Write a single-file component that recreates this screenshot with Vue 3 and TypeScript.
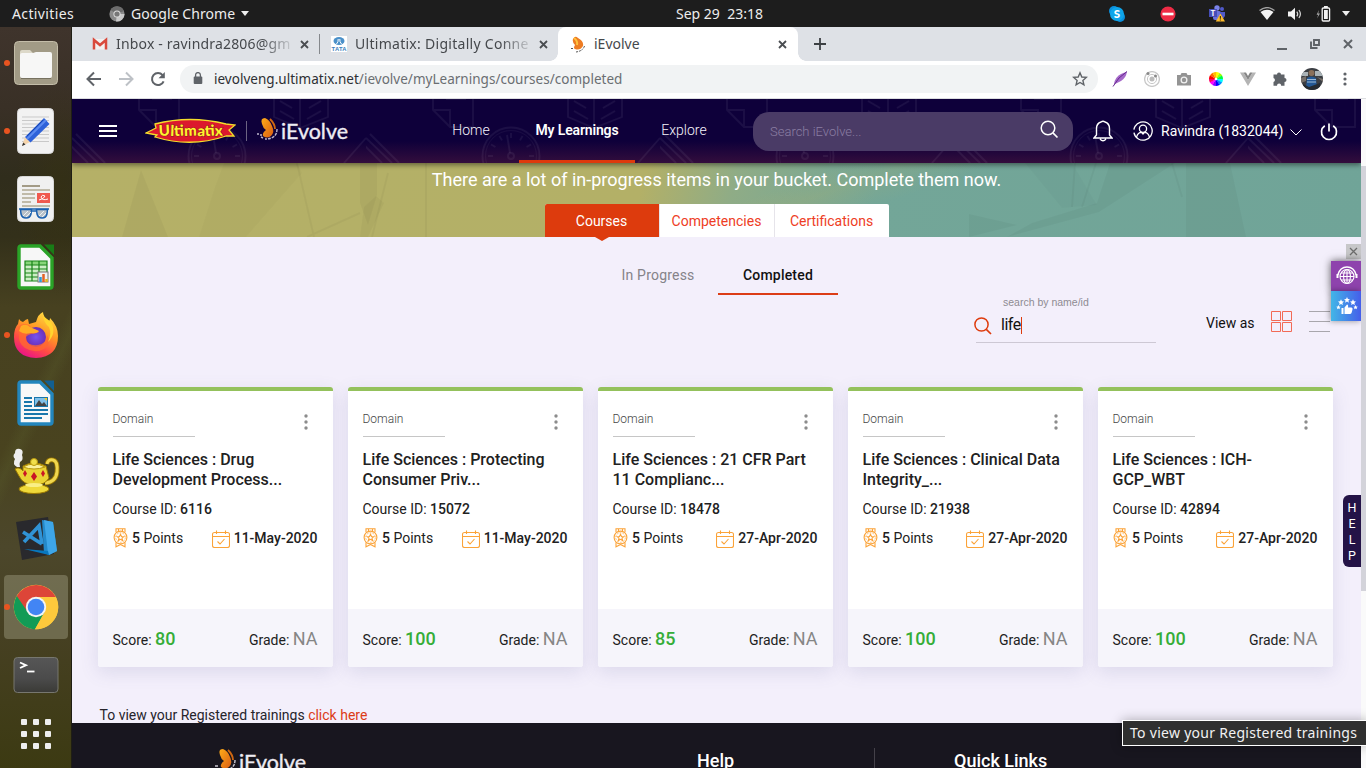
<script setup lang="ts">
interface Course {
  title: string[]
  id: string
  date: string
  score: number
}

const courses: Course[] = [
  { title: ['Life Sciences : Drug', 'Development Process...'], id: '6116', date: '11-May-2020', score: 80 },
  { title: ['Life Sciences : Protecting', 'Consumer Priv...'], id: '15072', date: '11-May-2020', score: 100 },
  { title: ['Life Sciences : 21 CFR Part', '11 Complianc...'], id: '18478', date: '27-Apr-2020', score: 85 },
  { title: ['Life Sciences : Clinical Data', 'Integrity_...'], id: '21938', date: '27-Apr-2020', score: 100 },
  { title: ['Life Sciences : ICH-', 'GCP_WBT'], id: '42894', date: '27-Apr-2020', score: 100 },
]

const nineDots: number[] = [0, 1, 2, 3, 4, 5, 6, 7, 8]
const clockTicks: number[] = [0, 30, 60, 90, 120, 150, 180, 210, 240, 270, 300, 330]
const wheel: string[] = ['#ff0', '#9f0', '#0f4', '#0ff', '#08f', '#00f', '#80f', '#f0f', '#f06', '#f00', '#f60', '#fb0']
</script>

<template>
  <div class="screen">
    <header class="topbar">
      <span class="activities">Activities</span>
      <svg class="app-ic" width="16" height="16" viewBox="0 0 16 16">
        <circle cx="8" cy="8" r="7.6" fill="#8b8b8b" />
        <path d="M8 8L1.5 4A7.6 7.6 0 0 1 15 5Z" fill="#6d6d6d" />
        <path d="M8 8H15.5A7.6 7.6 0 0 1 7 15.5Z" fill="#c9c9c9" />
        <circle cx="8" cy="8" r="3.6" fill="#ddd" /><circle cx="8" cy="8" r="2.6" fill="#777" />
      </svg>
      <span class="app-name">Google Chrome</span>
      <i class="tri"></i>
      <span class="clock">Sep 29&nbsp; 23:18</span>
      <div class="tray">
        <svg width="16" height="16" viewBox="0 0 16 16">
          <circle cx="5" cy="5" r="5" fill="#0a8fdc" /><circle cx="11" cy="11" r="5" fill="#0a8fdc" /><circle cx="8" cy="8" r="7" fill="#0fa5ea" />
          <text x="8" y="12" text-anchor="middle" font-family="Lato, sans-serif" font-weight="900" font-size="11.5" fill="#fff">S</text>
        </svg>
        <svg class="t2" width="16" height="16" viewBox="0 0 16 16"><circle cx="8" cy="8" r="7.6" fill="#ee2b45" /><rect x="2.5" y="6.7" width="11" height="2.6" fill="#fff" /></svg>
        <svg class="t3" width="18" height="17" viewBox="0 0 18 17">
          <circle cx="9" cy="3" r="2.7" fill="#7b83eb" /><circle cx="14" cy="4" r="2" fill="#5059c9" />
          <rect x="5" y="6" width="8" height="9" rx="2" fill="#6a72dc" /><path d="M12 7h5v4q-2 4-5 2z" fill="#5059c9" />
          <rect x="1" y="4" width="8" height="8" fill="#464eb8" />
          <text x="5" y="11" text-anchor="middle" font-family="Lato, sans-serif" font-weight="700" font-size="8" fill="#fff">T</text>
          <path d="M12.4 8.4L17 16.4H7.8Z" fill="#fdbb2b" /><path d="M12.4 11v2.7M12.4 14.4v1.2" stroke="#4a3500" stroke-width="1.2" />
        </svg>
        <svg class="t4" width="16" height="14" viewBox="0 0 16 14"><path d="M.5 3.6Q8-2.4 15.500 3.600" stroke="#a3a3a3" stroke-width="1.300" fill="none" /><path d="M1.500 5Q8 .3 14.500 5L8 13Z" fill="#f2f2f2" /></svg>
        <svg class="t5" width="16" height="14" viewBox="0 0 16 14"><path d="M1 4.500H4L8 .8V13L4 9.500H1Z" fill="#f2f2f2" /><path d="M9.800 4.600q1.800 2.400 0 4.800M11.900 3q3 4 0 8" stroke="#d8d8d8" stroke-width="1.200" fill="none" /></svg>
        <svg class="t6" width="16" height="16" viewBox="0 0 16 16"><path d="M4 4L1.600 8.800H3.300L2 12.500L5 7.600H3.200Z" fill="#aaa" /><rect x="7.200" y="2" width="7.400" height="13" rx="1" fill="none" stroke="#f2f2f2" stroke-width="1.300" /><rect x="9" y="4" width="3.800" height="9" fill="#f2f2f2" /><rect x="9" y="0" width="3.800" height="2" fill="#f2f2f2" /></svg>
        <i class="tri t7"></i>
      </div>
    </header>

    <div class="desk">
      <aside class="dock">
        <div class="slot run">
          <svg width="44" height="44" viewBox="0 0 44 44">
            <rect x=".5" y=".5" width="43" height="43" rx="4" fill="#a29b86" stroke="#c4bda9" />
            <path d="M6 11q0-2 2-2h8l3 3h3v10H6z" fill="#ddd9c9" />
            <path d="M6 14q0-2 2-2h11l3-1H36q2 0 2 2v22q0 2-2 2H8q-2 0-2-2z" fill="#f7f7f6" /><path d="M7 37.500H37" stroke="#777260" />
          </svg>
        </div>
        <div class="slot run">
          <svg width="38" height="46" viewBox="0 0 38 46">
            <rect x=".5" y=".5" width="36" height="45" rx="4" fill="#f2f2f2" stroke="#d7d7d7" />
            <path d="M5 9H32M5 12.500H32M5 16H32M5 19.500H32M5 23H32M5 26.500H32M5 30H32M5 33.500H32" stroke="#c9c9c9" />
            <path d="M5 38L8 29L13 34Z" fill="#f5d4ab" /><path d="M5 38L6.200 34.500L8.500 36.600Z" fill="#333" />
            <path d="M8 29L27 10L32.500 16L13.500 34.500Z" fill="#2e62d9" /><path d="M10 31L29 12" stroke="#5c8bf0" stroke-width="2" /><path d="M10 28L26 12" stroke="#1746b4" />
          </svg>
        </div>
        <div class="slot">
          <svg width="38" height="46" viewBox="0 0 38 46">
            <rect x=".5" y=".5" width="36" height="45" rx="4" fill="#f0f0f0" stroke="#d7d7d7" />
            <path d="M5 10H23" stroke="#a39b86" stroke-width="2" /><path d="M5 14H33M5 18H18M5 22H18M5 26H14M5 30H33" stroke="#c0baa9" stroke-width="2" />
            <rect x="20" y="17" width="13" height="10" fill="#f0594f" /><path d="M22 24q5-1 6-4q-3-2-4 1q1 4 7 2" fill="none" stroke="#fff" />
            <g fill="#b9c1c8" stroke="#1d62b0" stroke-width="1.500"><path d="M3.500 33.500H14.500L14 38Q13 42 9 42Q5 42 4 38Z" /><path d="M19.500 33.500H30.500L30 38Q29 42 25 42Q21 42 20 38Z" /><path d="M15 35h4M2 33h30" fill="none" /></g><path d="M6 40L11 35M9 41L14 36M22 40L27 35M25 41L29 37" stroke="#eef1f3" />
          </svg>
        </div>
        <div class="slot">
          <svg width="38" height="46" viewBox="0 0 38 46">
            <path d="M4 2H23L35 14V42Q35 44 33 44H4Q2 44 2 42V4Q2 2 4 2Z" fill="#f7f7f7" stroke="#2aa327" stroke-width="3.400" /><path d="M27 .5H37V11Z" fill="#197c17" />
            <path d="M8 17H30V37H8Z" fill="#ccefc4" /><path d="M8 17H30V21H8Z" fill="#88d67a" /><path d="M8 17H30V37H8ZM8 21H30M8 25H30M8 29H30M8 33H30M15 17V37M22 17V37" stroke="#188418" stroke-width="1.200" fill="none" />
            <rect x="21" y="28" width="10" height="10" fill="#f2f2f2" stroke="#777" /><path d="M23.500 33V38" stroke="#2e9ad5" stroke-width="2.500" /><path d="M26.500 30V38" stroke="#e26226" stroke-width="2.500" /><path d="M29.500 35V38" stroke="#e3b91d" stroke-width="2.500" />
          </svg>
        </div>
        <div class="slot run">
          <svg width="46" height="48" viewBox="0 0 46 48">
            <defs>
              <linearGradient id="fox" x1=".8" y1="0" x2=".3" y2="1"><stop offset="0" stop-color="#ffe246" /><stop offset=".4" stop-color="#ff9a24" /><stop offset=".72" stop-color="#ff4a45" /><stop offset="1" stop-color="#e8128a" /></linearGradient>
              <radialGradient id="globe"><stop offset="0" stop-color="#7652ef" /><stop offset="1" stop-color="#6b2fb5" /></radialGradient>
            </defs>
            <path d="M23 11Q25 3 30 1Q30 6 36 10Q37 9 37 7Q45 15 45 25Q45 46 23 47Q1 46 1 26Q1 17 5 13L6 8Q8 11 10 11Q13 8 15 8L16 13Z" fill="url(#fox)" />
            <circle cx="23" cy="26" r="10" fill="url(#globe)" />
            <path d="M5 16Q10 11 16 14L20 19Q25 18 26 21Q22 23 18 23Q11 25 13 29Q15 35 25 34Q34 32 34 24Q39 32 31 38Q22 43 12 37Q5 32 6 24Z" fill="#ff6a30" opacity=".75" />
            <path d="M8 15Q13 12 17 16L26 20Q24 23 18 22Q11 24 6 20Z" fill="#ffac24" /><path d="M30 5Q31 12 36 16Q39 23 35 31Q44 22 38 11Z" fill="#ffd52f" />
          </svg>
        </div>
        <div class="slot">
          <svg width="38" height="46" viewBox="0 0 38 46">
            <path d="M4 2H23L35 14V42Q35 44 33 44H4Q2 44 2 42V4Q2 2 4 2Z" fill="#f8f8f8" stroke="#2386bd" stroke-width="3.400" /><path d="M27 .5H37V11Z" fill="#125f92" />
            <path d="M7 18H15M7 22H15M7 26H15M7 30H31M7 34H31M7 38H25" stroke="#1977ac" stroke-width="1.800" /><rect x="17.500" y="17.500" width="13" height="9" fill="#7fc0e9" stroke="#1977ac" /><path d="M18 26L22 20L25 24L27 22L30 26Z" fill="#444" /><path d="M27 18H30V21Z" fill="#ffc923" />
          </svg>
        </div>
        <div class="slot">
          <svg width="50" height="48" viewBox="0 0 50 48">
            <path d="M6 20Q1 17 4 12Q1 9 4 6Q4 1 9 2Q13 3 11 8Q13 13 9 15Q8 17 9 20Z" fill="#eee" />
            <path d="M36 17Q37 12 42 13Q47 14 46 25Q45 35 34 36" fill="none" stroke="#9b7902" stroke-width="4.800" /><path d="M36 17Q37 12 42 13Q47 14 46 25Q45 35 34 36" fill="none" stroke="#f0d74e" stroke-width="3" />
            <path d="M12 19Q23 13 35 19L38 31Q34 38 24 38Q12 38 8 29L4 22Q8 19 12 24Z" fill="#ead234" stroke="#9b7902" /><ellipse cx="23" cy="42" rx="15" ry="4.500" fill="#efd939" stroke="#9b7902" /><ellipse cx="23" cy="38" rx="9" ry="2" fill="#f9ef86" />
            <path d="M12 20Q23 14 34 20Q23 24 12 20Z" fill="#fbf19b" stroke="#b8980d" /><circle cx="23" cy="15" r="3.500" fill="#f2df4b" stroke="#b8980d" />
            <g fill="#c91525"><path d="M14 23L16 26.500L14 30L12 26.500Z" /><path d="M23 25L26 29.500L23 34L20 29.500Z" /><path d="M32 23L34 26.500L32 30L30 26.500Z" /></g>
          </svg>
        </div>
        <div class="slot">
          <svg width="42" height="46" viewBox="0 0 42 46">
            <path d="M1 6L33 1L39 38L7 44Z" fill="#29292d" /><path d="M27 4L38 6L42 35L34 39L29 37Z" fill="#2489ca" /><path d="M29 4L33 37L34 39L42 35L38 6Z" fill="#3ea6e8" /><path d="M9 33L33 35L34 39Z" fill="#0878bf" />
            <path d="M8 16L27 28M9 26L24 10L27 28" fill="none" stroke="#3093d6" stroke-width="3.600" />
          </svg>
        </div>
        <div class="slot run focused">
          <svg width="46" height="46" viewBox="0 0 46 46">
            <circle cx="23" cy="23" r="22.300" fill="#fdc93c" />
            <path d="M3.500 12.500A22.300 22.300 0 0 1 42.800 13H23L13 28Z" fill="#dd4538" />
            <path d="M3.800 12A22.300 22.300 0 0 0 22 45.300L32 28L14 27Z" fill="#129b56" />
            <path d="M23 13H42.800A22.300 22.300 0 0 1 22 45.300L32 27Z" fill="#fdc93c" />
            <circle cx="23" cy="23" r="10.200" fill="#f4f4f4" /><circle cx="23" cy="23" r="8.300" fill="#4285f4" />
          </svg>
        </div>
        <div class="slot">
          <svg width="46" height="38" viewBox="0 0 46 38">
            <defs><linearGradient id="term" x1="0" y1="0" x2="0" y2="1"><stop offset="0" stop-color="#565656" /><stop offset=".6" stop-color="#4b4b4b" /><stop offset="1" stop-color="#3a3a36" /></linearGradient></defs>
            <rect x="1" y="1.500" width="44" height="35" rx="3.500" fill="url(#term)" stroke="#77776f" />
            <path d="M7 6.500L13 9.200L7 12" fill="none" stroke="#fff" stroke-width="1.900" /><path d="M14 15.500H21.500" stroke="#fff" stroke-width="1.800" />
          </svg>
        </div>
        <div class="apps"><i v-for="d in nineDots" :key="d"></i></div>
      </aside>

      <main class="browser">
        <div class="tabs">
          <div class="tab first">
            <svg width="16" height="16" viewBox="0 0 16 16"><rect x="1.500" y="3" width="13" height="10.500" fill="#f2f0ef" /><path d="M2 13.500V4L8 9L14 4V13.500" fill="none" stroke="#d9493c" stroke-width="2.500" /></svg>
            <span class="tt fade">Inbox - ravindra2806@gm</span>
            <svg class="x" width="9" height="9" viewBox="0 0 9 9"><path d="M1 1L8 8M8 1L1 8" /></svg>
          </div>
          <div class="tab second">
            <svg width="16" height="16" viewBox="0 0 16 16"><rect width="16" height="16" fill="#fff" /><ellipse cx="8" cy="5" rx="5.500" ry="4" fill="#4a90c9" /><path d="M5.500 8Q7.500 6 7.200 3M10.500 8Q8.500 6 8.800 3" stroke="#fff" fill="none" /><text x=".5" y="15" font-family="Liberation Sans, sans-serif" font-weight="700" font-size="5.800" textLength="15" fill="#3a80bd">TATA</text></svg>
            <span class="tt fade">Ultimatix: Digitally Conne</span>
            <svg class="x" width="9" height="9" viewBox="0 0 9 9"><path d="M1 1L8 8M8 1L1 8" /></svg>
          </div>
          <div class="tab active">
            <svg width="16" height="17" viewBox="0 0 16 17"><path d="M3 3Q5-1 8 2Q14 5 13 10Q10 15 5 13Q3 12 5 9Q2 6 3 3Z" fill="#ed7c23" /><path d="M4 2Q8 5 7 9" stroke="#ffc23e" stroke-width="2" fill="none" /><path d="M14.500 10Q13 15 6 16M1 12.500h2" stroke="#555" stroke-dasharray="2 1" fill="none" /></svg>
            <span class="tt">iEvolve</span>
            <svg class="x" width="9" height="9" viewBox="0 0 9 9"><path d="M1 1L8 8M8 1L1 8" /></svg>
          </div>
          <svg class="plus" width="12" height="12" viewBox="0 0 12 12"><path d="M6 0V12M0 6H12" stroke="#3c4043" stroke-width="1.800" /></svg>
          <div class="winctl">
            <svg width="10" height="12" viewBox="0 0 10 12"><path d="M0 11H10" stroke="#5f6368" stroke-width="2" /></svg>
            <svg width="10" height="10" viewBox="0 0 10 10"><path d="M4 1H9V6H4ZM1 2.500V9H7.500" stroke="#5f6368" stroke-width="1.900" fill="none" /></svg>
            <svg width="10" height="10" viewBox="0 0 10 10"><path d="M1 1L9 9M9 1L1 9" stroke="#5f6368" stroke-width="2" /></svg>
          </div>
        </div>

        <div class="toolbar">
          <svg width="16" height="16" viewBox="0 0 16 16"><path d="M15 8H2M8 1.500L1.500 8L8 14.500" fill="none" stroke="#5f6368" stroke-width="2" /></svg>
          <svg width="16" height="16" viewBox="0 0 16 16"><path d="M1 8H14M8 1.500L14.500 8L8 14.500" fill="none" stroke="#bdc1c6" stroke-width="2" /></svg>
          <svg width="16" height="16" viewBox="0 0 16 16"><path d="M13.600 10.300A6 6 0 1 1 12.600 4.200" fill="none" stroke="#5f6368" stroke-width="2" /><path d="M14.800 1V7.300H8.500Z" fill="#5f6368" /></svg>
          <div class="omni">
            <svg width="10" height="13" viewBox="0 0 10 13"><rect x=".7" y="4.500" width="8.600" height="7.500" rx="1" fill="#5f6368" /><path d="M2.600 5V3A2.400 2.400 0 0 1 7.400 3V5" fill="none" stroke="#5f6368" stroke-width="1.300" /></svg>
            <span class="url"><b>ievolveng.ultimatix.net</b>/ievolve/myLearnings/courses/completed</span>
            <svg class="star" width="16" height="16" viewBox="0 0 16 16"><path d="M8 1.800L9.800 6L14.300 6.400L10.900 9.400L11.900 13.900L8 11.500L4.100 13.900L5.100 9.400L1.700 6.400L6.200 6Z" fill="none" stroke="#5f6368" stroke-width="1.400" /></svg>
          </div>
          <div class="exts">
            <svg width="16" height="16" viewBox="0 0 16 16"><path d="M2 13Q3 6 9 3L15 .5Q14 7 9 10L3 13Z" fill="#a569c9" /><path d="M1 15.500Q6 6 15 .5" fill="none" stroke="#682b90" /></svg>
            <svg width="16" height="16" viewBox="0 0 16 16"><g fill="none" stroke="#c8c8c8"><circle cx="8" cy="8" r="7.400" stroke-width="1.300" /><circle cx="8" cy="8" r="4.600" /></g><circle cx="8" cy="8" r="2.500" fill="#bbb" /><circle cx="4" cy="2.500" r="1.500" fill="#888" /><circle cx="11.500" cy="5" r="1.500" fill="#888" /></svg>
            <svg width="16" height="16" viewBox="0 0 16 16"><path d="M1 4H4.500L5.500 2H10.500L11.500 4H15V14.500H1Z" fill="#949494" /><circle cx="8" cy="9" r="3.500" fill="#f1f1f1" /><circle cx="8" cy="9" r="2.200" fill="#949494" /></svg>
            <svg width="16" height="16" viewBox="0 0 16 16"><path v-for="(c, i) in wheel" :key="c" d="M8 8V1A7 7 0 0 1 11.700 2Z" :fill="c" :transform="`rotate(${i * 30} 8 8)`" /><circle cx="8" cy="8" r="1.300" fill="#fff" /></svg>
            <svg width="16" height="16" viewBox="0 0 16 16"><path d="M0 1.500H3.500L8 9L12.500 1.500H16L8 15Z" fill="#b4b4b4" /><path d="M3.500 1.500H6L8 5L10 1.500H12.500L8 9Z" fill="#858585" /></svg>
            <svg width="16" height="16" viewBox="0 0 16 16"><path d="M1.500 3.500H5A2 2 0 1 1 9 3.500H12.500V7A2 2 0 1 1 12.500 11V14.700H9.200A2.100 2.100 0 0 0 5 14.700H1.500V11A2.100 2.100 0 0 0 1.500 7Z" fill="#5f6368" /></svg>
            <svg class="avatar" width="22" height="22" viewBox="0 0 22 22"><defs><clipPath id="av"><circle cx="11" cy="11" r="11" /></clipPath></defs><g clip-path="url(#av)"><rect width="22" height="22" fill="#3b3e43" /><path d="M0 4H7V8H0ZM14 3H22V8H14Z" fill="#aab3b7" /><path d="M0 10L5 8V13L0 15ZM16 9L22 11V14Z" fill="#77706a" /><circle cx="10.500" cy="5" r="3" fill="#8a705a" /><path d="M5 20L6 10Q10 7 15 10L16 20Z" fill="#235895" /><path d="M6 11.500H15M6 14H15" stroke="#9dbbd8" stroke-width="1" /><path d="M2 16L8 19L19 15V22H2Z" fill="#252b32" /></g></svg>
            <svg class="kebab" width="4" height="14" viewBox="0 0 4 14"><g fill="#5f6368"><circle cx="2" cy="2" r="1.600" /><circle cx="2" cy="7" r="1.600" /><circle cx="2" cy="12" r="1.600" /></g></svg>
          </div>
        </div>

        <div class="viewport">
          <div class="page">
            <header class="site">
              <svg class="pattern" width="1289" height="64">
                <defs>
                  <pattern id="doodle" x="0" y="0" width="294" height="64" patternUnits="userSpaceOnUse">
                    <g fill="none" stroke="#fff" stroke-opacity=".06" stroke-width="1.800">
                      <path d="M67 0V11L84 28H107V0M67 11H84V28M80 0H100" />
                      <circle cx="145" cy="57" r="28.500" /><circle cx="145" cy="57" r="25.500" stroke-width=".8" />
                      <circle cx="145" cy="57" r="3" /><path d="M144 54L141 36" />
                      <path v-for="t in clockTicks" :key="t" d="M145 34V39" :transform="`rotate(${t} 145 57)`" />
                      <path d="M202 0V18L228 29L256 18V0M228 0V29M208 2L220 9M208 12L222 20M249 2L237 9M249 12L235 20" />
                      <path d="M294 39L272 64M0 39L26 64M-4 44L16 64M4 35L33 64" />
                    </g>
                  </pattern>
                  <linearGradient id="wing" x1="0" y1="0" x2="1" y2="1"><stop offset="0" stop-color="#ffac18" /><stop offset="1" stop-color="#d95d13" /></linearGradient>
                </defs>
                <rect width="1289" height="64" fill="url(#doodle)" />
              </svg>
              <div class="bar">
                <div class="burger"><i></i><i></i><i></i></div>
                <svg class="ultimatix" width="91" height="26" viewBox="0 0 91 26">
                  <path d="M1 15L11 10L10 6Q45-3 81 6L90 7L84 12L89 18L81 18Q46 30 10 19L12 17Z" fill="#dc182d" stroke="#f3dc2b" stroke-width="1.300" />
                  <text x="14" y="18" rotate="-3 2 -3 3 -2 3 -3 2 -3" font-family="Lato, sans-serif" font-weight="900" font-size="15" textLength="64" fill="#fff22d" stroke="#8d1420" stroke-width="1" paint-order="stroke">Ultimatix</text>
                </svg>
                <i class="vsep"></i>
                <svg class="ievolve" width="92" height="28" viewBox="0 0 92 28">
                  <path d="M5 7Q3 1 8 1Q13 3 15 9Q18 15 14 19Q10 22 6 19Q5 16 9 13Q6 11 5 7Z" fill="url(#wing)" /><path d="M13 2Q18 7 18 12" stroke="#cf6711" stroke-width="1.800" fill="none" /><path d="M20 12Q20 22 8 22M4 20l2 1M0 17h2M3 18h2" stroke="#bdb6cd" stroke-width="1.400" stroke-dasharray="3 1" fill="none" />
                  <text x="24" y="22" font-family="Lato, sans-serif" font-size="21" textLength="67" lengthAdjust="spacingAndGlyphs" fill="#eeecf3" stroke="#eeecf3" stroke-width=".35">iEvolve</text>
                </svg>
                <nav class="nav">
                  <a>Home</a><a class="on">My Learnings</a><a>Explore</a>
                </nav>
                <div class="search">
                  <span>Search iEvolve...</span>
                  <svg width="19" height="19" viewBox="0 0 19 19"><circle cx="8" cy="8" r="6.800" fill="none" stroke="#fff" stroke-width="1.500" /><path d="M12.900 12.900L17.500 17.500" stroke="#fff" stroke-width="1.700" /></svg>
                </div>
                <svg class="bell" width="20" height="22" viewBox="0 0 20 22"><path d="M1 18H19L16.500 15V8.500Q16.500 3.500 12 2Q10 .5 8 2Q3.500 3.500 3.500 8.500V15ZM7 19Q10 22.500 13 19" fill="none" stroke="#fff" stroke-width="1.400" /></svg>
                <svg class="user" width="20" height="20" viewBox="0 0 20 20"><circle cx="10" cy="10" r="9.200" fill="none" stroke="#fff" stroke-width="1.300" stroke-dasharray="51 3" transform="rotate(210 10 10)" /><circle cx="10" cy="7.800" r="3.600" fill="none" stroke="#fff" stroke-width="1.300" /><path d="M3.500 16Q5 11.500 8.500 11.400L10 13L11.500 11.400Q15 11.500 16.500 16" fill="none" stroke="#fff" stroke-width="1.200" /></svg>
                <span class="uname">Ravindra (1832044)</span>
                <svg class="chev" width="12" height="7" viewBox="0 0 12 7"><path d="M.5.5L6 6L11.500.5" fill="none" stroke="#fff" /></svg>
                <svg class="power" width="18" height="18" viewBox="0 0 18 18"><path d="M4.800 2.800A7.500 7.500 0 1 0 13.200 2.800M9 .5V8.500" fill="none" stroke="#fff" stroke-width="1.700" /></svg>
              </div>
            </header>

            <section class="banner">
              <svg class="facets" width="1289" height="74">
                <g fill="#000" fill-opacity=".035">
                  <path d="M69 7L50 74H96Z" /><path d="M143 24L127 74H174L230 10L225 0H152Z" fill-opacity=".02" /><path d="M288 0H305V32L296 62L288 40Z" /><path d="M292 44L304 33L312 40L296 74H288Z" fill-opacity=".03" />
                  <path d="M897 51L945 62L897 74Z" /><path d="M935 74L1027 49L1103 0H1038L1025 40L960 60Z" /><path d="M1114 0H1158L1174 74H1114Z" /><path d="M953 0L990 45L1025 42L1000 0Z" fill-opacity=".02" />
                </g>
                <g stroke="#000" stroke-opacity=".035" stroke-width="2" fill="none"><path d="M225 0L242 74M354 0V74M316 10L300 74M288 50L235 74M1003 0L1000 44M1100 0L1110 34M1024 0L1010 44" /></g>
              </svg>
              <p>There are a lot of in-progress items in your bucket. Complete them now.</p>
              <div class="switch"><span class="sel">Courses</span><span>Competencies</span><span>Certifications</span></div>
            </section>

            <section class="content">
              <div class="subnav"><span>In Progress</span><span class="sel">Completed</span></div>
              <div class="tools">
                <div class="find">
                  <label>search by name/id</label>
                  <div class="row">
                    <svg width="18" height="18" viewBox="0 0 18 18"><circle cx="7.500" cy="7.500" r="6.600" fill="none" stroke="#de3b0d" stroke-width="1.500" /><path d="M12.300 12.300L17 17" stroke="#de3b0d" stroke-width="1.700" /></svg>
                    <span>life</span><i></i>
                  </div>
                </div>
                <span class="viewas">View as</span>
                <svg class="gridic" width="21" height="21" viewBox="0 0 21 21"><path d="M.5.5H9.500V9.500H.5ZM11.500.5H20.500V9.500H11.500ZM.5 11.500H9.500V20.500H.5ZM11.500 11.500H20.500V20.500H11.500Z" fill="none" stroke="#f26a56" /></svg>
                <svg class="listic" width="21" height="22" viewBox="0 0 21 22"><path d="M0 1.500H21M0 11.500H21M0 21.500H21" stroke="#a8a6ac" /></svg>
              </div>

              <div class="cards">
                <article v-for="c in courses" :key="c.id" class="card">
                  <div class="body">
                    <div class="head">
                      <span class="domain">Domain</span>
                      <svg width="4" height="16" viewBox="0 0 4 16"><g fill="#8c8c8c"><circle cx="2" cy="2" r="1.700" /><circle cx="2" cy="8" r="1.700" /><circle cx="2" cy="14" r="1.700" /></g></svg>
                    </div>
                    <h3>{{ c.title[0] }}<br />{{ c.title[1] }}</h3>
                    <p class="cid">Course ID: <b>{{ c.id }}</b></p>
                    <div class="meta">
                      <svg width="15" height="20" viewBox="0 0 15 20"><g fill="none" stroke="#fba338" stroke-width="1.100"><circle cx="7.500" cy="9.500" r="6.400" /><circle cx="7.500" cy="9.500" r="4.800" stroke-width=".7" stroke-dasharray="2 1" /><path d="M7.500 6.300L8.500 8.500L10.800 8.700L9 10.200L9.600 12.500L7.500 11.300L5.400 12.500L6 10.200L4.200 8.700L6.500 8.500ZM3 4V.8H12V4M5.500 1V3M9.500 1V3M3 14.500V18.800L7.500 16.500L12 18.800V14.500" /></g></svg>
                      <span><b>5</b> Points</span>
                      <svg class="cal" width="18" height="18" viewBox="0 0 18 18"><path d="M2.500 2.500H15.500Q17.500 2.500 17.500 4.500V15.500Q17.500 17.500 15.500 17.500H2.500Q.5 17.500.5 15.500V4.500Q.5 2.500 2.500 2.500ZM.5 6.500H17.500M4.500.5V4M13.500.5V4M5.500 11.500L8 14L12.500 9" fill="none" stroke="#fba338" stroke-width="1.100" /></svg>
                      <b>{{ c.date }}</b>
                    </div>
                  </div>
                  <footer>
                    <span>Score: <b>{{ c.score }}</b></span>
                    <span>Grade: <em>NA</em></span>
                  </footer>
                </article>
              </div>
              <p class="registered">To view your Registered trainings <a>click here</a></p>
            </section>

            <footer class="foot">
              <svg width="92" height="24" viewBox="0 0 92 24">
                <path d="M5 7Q3 1 8 1Q13 3 15 9Q18 15 14 19Q10 22 6 19Q5 16 9 13Q6 11 5 7Z" fill="url(#wing)" /><path d="M13 2Q18 7 18 12" stroke="#cf6711" stroke-width="1.800" fill="none" /><path d="M20 12Q20 22 8 22M0 18h3" stroke="#c8c5ce" stroke-width="1.400" stroke-dasharray="3 1" fill="none" />
                <text x="24" y="22" font-family="Lato, sans-serif" font-size="21" textLength="67" lengthAdjust="spacingAndGlyphs" fill="#eeecf3" stroke="#eeecf3" stroke-width=".35">iEvolve</text>
              </svg>
              <h4 class="help-h">Help</h4>
              <i></i>
              <h4 class="links-h">Quick Links</h4>
            </footer>

            <div class="widget">
              <div class="close"><svg width="9" height="9" viewBox="0 0 9 9"><path d="M1 1L8 8M8 1L1 8" stroke="#6d6d6d" stroke-width="1.300" /></svg></div>
              <div class="w1"><svg width="22" height="20" viewBox="0 0 22 20"><g fill="none" stroke="#fff" stroke-width="1.100"><circle cx="11" cy="10.500" r="7" /><ellipse cx="11" cy="10.500" rx="3.400" ry="7" /><path d="M11 3.500V17.500M4 10.500H18M5 7H17M5 14H17" /><path d="M1.800 9Q4 1 11 1Q18 1 20.200 9" stroke-width="1.500" /></g><path d="M.5 8H2.500V12H.5ZM19.500 8H21.500V12H19.500Z" fill="#fff" /></svg></div>
              <div class="w2"><svg width="22" height="18" viewBox="0 0 22 18"><g fill="#fff"><path id="st" d="M11 0L11.900 2L14 2.200L12.400 3.600L12.900 5.700L11 4.600L9.100 5.700L9.600 3.600L8 2.200L10.100 2Z" /><use href="#st" x="-6" y="2.300" /><use href="#st" x="6" y="2.300" /><use href="#st" transform="translate(-5.800 8) scale(.75)" /><use href="#st" transform="translate(11.300 8) scale(.75)" /><path d="M5.500 11H7.500V17H5.500ZM8.500 10.500L11 7.500Q12.500 7.500 12 10.500H15.500Q17 11 16.500 12.500L15.500 16Q15 17 14 17H8.500Z" /></g></svg></div>
            </div>
            <div class="help"><span>H</span><span>E</span><span>L</span><span>P</span></div>
          </div>
          <div class="scroll"><i></i></div>
        </div>
      </main>
    </div>
    <div class="tip">To view your Registered trainings</div>
  </div>
</template>

<style>
html, body { margin: 0; overflow: hidden; }
</style>

<style scoped>
* { box-sizing: border-box; }
svg { display: block; flex: none; }
p, h3, h4 { margin: 0; }
.screen { position: relative; width: 1366px; height: 768px; overflow: hidden; display: flex; flex-direction: column; font-family: Roboto, "Liberation Sans", sans-serif; background: #f3effb; }
.topbar { height: 27px; flex: none; background: #1d1d1d; display: flex; align-items: center; color: #ededed; font: 14px/27px "Noto Sans", sans-serif; white-space: nowrap; }
.activities { margin-left: 12px; width: 97px; letter-spacing: .38px; }
.app-ic { margin-right: 6px; }
.app-name { letter-spacing: .06px; width: 105px; }
.tri { width: 0; height: 0; border: 4.500px solid transparent; border-top: 5px solid #eee; border-bottom: 0; margin-left: 5px; }
.clock { margin-left: 427px; }
.tray { display: flex; align-items: center; margin-left: auto; width: 257px; }
.t2 { margin-left: 35px; }
.t3 { margin-left: 32px; }
.t4 { margin-left: 33px; }
.t5 { margin-left: 12px; }
.t6 { margin-left: 12px; }
.tri.t7 { margin-left: 11px; }
.desk { display: flex; flex: 1; min-height: 0; }
.dock { width: 72px; flex: none; background: radial-gradient(ellipse 45px 110px at 60px 160px, rgba(55, 50, 15, .5), transparent), linear-gradient(115deg, transparent 48%, rgba(90, 95, 45, .28) 51%, transparent 54%), linear-gradient(180deg, #3f342c 0, #393026 80px, #302d1c 150px, #33301a 210px, #474120 280px, #49431f 430px, #4c472b 520px, #464022 610px, #3c3a12 741px); display: flex; flex-direction: column; align-items: center; padding-top: 2px; box-shadow: inset -1px 0 #1f1e14; }
.slot { position: relative; width: 64px; height: 64px; margin: 2px 0; display: flex; align-items: center; justify-content: center; flex: none; }
.focused { background: rgba(150, 148, 120, .5); border-radius: 4px; }
.run::before { content: ''; position: absolute; left: 0; top: 29px; width: 6px; height: 6px; border-radius: 50%; background: #e95420; }
.apps { width: 30px; height: 30px; margin-top: 10px; display: grid; grid-template-columns: repeat(3, 6px); gap: 6px; }
.apps i { width: 6px; height: 6px; background: #eee; border-radius: 1px; }
.browser { flex: 1; min-width: 0; display: flex; flex-direction: column; }
.tabs { height: 34px; flex: none; background: #dee1e6; display: flex; align-items: center; }
.tab { height: 34px; display: flex; align-items: center; color: #45484c; font: 14px "Noto Sans", sans-serif; flex: none; }
.first { width: 248px; padding-left: 20px; background: linear-gradient(#85888c, #85888c) no-repeat 247px 7px / 1px 20px; }
.second { width: 238px; padding-left: 11px; }
.active { width: 240px; padding-left: 12px; background: #fff; border-radius: 8px 8px 0 0; position: relative; }
.active::before, .active::after { content: ''; position: absolute; bottom: 0; width: 8px; height: 8px; }
.active::before { left: -8px; background: radial-gradient(circle at 0 0, transparent 7.500px, #fff 8px); }
.active::after { right: -8px; background: radial-gradient(circle at 100% 0, transparent 7.500px, #fff 8px); }
.tt { margin-left: 8px; width: 175px; white-space: nowrap; overflow: hidden; line-height: 20px; letter-spacing: .18px; }
.second .tt { letter-spacing: .28px; }
.active .tt { letter-spacing: 0; }
.fade { -webkit-mask-image: linear-gradient(90deg, #000 145px, transparent 180px); mask-image: linear-gradient(90deg, #000 145px, transparent 180px); }
.x { margin-left: 8.500px; stroke: #4a4d51; stroke-width: 1.800; }
.plus { margin-left: 16px; }
.winctl { display: flex; margin-left: auto; margin-right: 13px; gap: 23px; align-items: center; }
.toolbar { height: 38px; flex: none; background: #fff; border-bottom: 1px solid #dcdde0; display: flex; align-items: center; padding: 0 0 2px 14px; gap: 16px; }
.omni { width: 918px; height: 28px; margin: 0 0 0 -2px; background: #f1f3f4; border-radius: 14px; display: flex; align-items: center; padding-left: 13px; flex: none; }
.url { font: 13.500px "Noto Sans", sans-serif; color: #6a6e72; margin-left: 11px; white-space: nowrap; letter-spacing: .02px; }
.url b { font-weight: 400; color: #2d2f33; }
.star { margin: 0 10px 0 auto; }
.exts { display: flex; align-items: center; gap: 16px; margin-left: -2px; }
.avatar { margin-left: -3px; margin-right: 4px; }
.viewport { flex: 1; min-height: 0; display: flex; }
.page { width: 1289px; position: relative; flex: none; overflow: hidden; display: flex; flex-direction: column; background: #f3effb; }
.scroll { flex: 1; background: #fafafa; padding-top: 67px; }
.scroll i { display: block; height: 425px; background: #d3d3da; }
.site { height: 64px; flex: none; position: relative; z-index: 2; background: linear-gradient(#0e003a 0, #0e003a 42px, #330d3c 64px); box-shadow: 0 2px 5px rgba(0, 0, 0, .45); }
.pattern { position: absolute; inset: 0; }
.bar { position: relative; display: flex; align-items: center; height: 64px; padding-left: 27px; color: #fff; }
.burger { width: 18px; height: 12px; display: flex; flex-direction: column; justify-content: space-between; flex: none; }
.burger i { height: 2px; background: #fff; }
.ultimatix { margin-left: 28px; }
.vsep { width: 1px; height: 20px; background: #6b6382; margin-left: 10px; flex: none; }
.ievolve { margin: -1px 0 0 10px; }
.nav { display: flex; margin-left: 64px; height: 64px; flex: none; }
.nav a { width: 116px; text-align: center; font-size: 14px; line-height: 62px; font-weight: 300; color: #f5f3fa; }
.nav a:first-child { width: 106px; margin: 0 -5px 0 5px; }
.nav a.on { font-weight: 600; letter-spacing: -.15px; color: #fff; border-bottom: 3px solid #de3a0c; height: 64px; }
.nav a:last-child { width: 98px; }
.search { width: 320px; height: 39px; border-radius: 16px; background: #4a3b66; margin-left: 20px; display: flex; align-items: center; justify-content: space-between; padding: 0 14px 3px 17px; flex: none; }
.search span { font-size: 13px; font-weight: 300; color: #8b7ea3; padding-top: 3px; }
.bell { margin-left: 20px; }
.user { margin-left: 20px; margin-top: -1px; }
.uname { font-size: 14px; margin-left: 8px; white-space: nowrap; width: 122px; }
.chev { margin-left: 7px; margin-top: 2px; }
.power { margin-left: 18px; margin-top: 1px; }
.banner { height: 74px; flex: none; position: relative; display: flex; flex-direction: column; align-items: center; background: linear-gradient(160deg, transparent 52%, rgba(180, 176, 100, .18) 56%, transparent 62%), linear-gradient(105deg, #b5b067 0, #b3b067 44%, #8fac86 51%, #73a698 62%, #70a498 100%); color: #fff; }
.facets { position: absolute; inset: 0; }
.banner p { position: relative; font-size: 18px; line-height: 22px; margin-top: 6px; white-space: nowrap; }
.switch { position: relative; display: flex; width: 344px; height: 33px; margin-top: 13px; background: #fff; border-radius: 2px 2px 0 0; }
.switch span { flex: 1; text-align: center; font-size: 14px; line-height: 34px; color: #ee3d25; border-left: 1px solid #e6e4ea; }
.switch .sel { position: relative; background: #dd3b0d; color: #fff; border: 0; border-radius: 2px 0 0 0; flex: 0 0 114px; }
.switch .sel::after { content: ''; position: absolute; left: 50px; top: 33px; border: 7px solid transparent; border-top: 4px solid #dd3b0d; border-bottom: 0; }
.content { height: 486px; flex: none; display: flex; flex-direction: column; }
.subnav { display: flex; margin: 16px 0 0 526px; height: 42px; flex: none; }
.subnav span { width: 120px; text-align: center; font-size: 14px; line-height: 44px; color: #858389; letter-spacing: .2px; }
.subnav .sel { color: #111; font-weight: 500; border-bottom: 2px solid #dc3d16; }
.tools { display: flex; height: 92px; flex: none; align-items: flex-start; padding-left: 904px; }
.find { width: 180px; height: 48px; border-bottom: 1px solid #cdc8d4; }
.find label { display: block; font: 10.500px/14px "Liberation Sans", sans-serif; color: #8e8b92; margin-left: 27px; }
.row { display: flex; align-items: center; height: 28px; margin: 2px 0 0 -2px; font-size: 16px; color: #111; }
.row span { margin: -2px 0 0 9px; letter-spacing: -.5px; }
.row svg { margin-top: 2px; }
.row i { width: 1px; height: 17px; background: #dd3b0d; }
.viewas { margin: 20px 0 0 50px; font-size: 14px; line-height: 16px; width: 65px; color: #111; }
.gridic { margin-top: 16px; }
.listic { margin: 15px 0 0 17px; }
.cards { display: flex; gap: 15px; padding-left: 26px; height: 280px; flex: none; }
.card { width: 235px; height: 280px; flex: none; border-top: 4px solid #94c15c; border-radius: 3px; background: #fff; box-shadow: 0 5px 18px rgba(90, 85, 150, .15); display: flex; flex-direction: column; color: #212121; font-size: 14px; }
.body { height: 218px; padding: 19px 15.500px 0 14.500px; }
.head { display: flex; justify-content: space-between; padding-right: 9.500px; }
.domain { font-size: 12px; line-height: 18px; font-weight: 300; width: 82px; height: 27px; border-bottom: 1px solid #c6c6c6; color: #444; }
.head svg { margin-top: 4px; }
h3 { font-size: 16px; line-height: 20px; font-weight: 500; margin-top: 13px; white-space: nowrap; }
.cid { margin-top: 10px; line-height: 18px; }
.card b { font-weight: 500; }
.meta { display: flex; align-items: center; height: 20px; margin-top: 10px; }
.meta > span { margin-left: 4.500px; }
.meta .cal { margin-left: auto; margin-right: 4px; margin-top: 1px; }
.card footer { height: 58px; background: #f6f5fb; display: flex; justify-content: space-between; align-items: baseline; padding: 19px 15.500px 0 14.500px; border-radius: 0 0 3px 3px; line-height: 22px; }
.card footer b { color: #35ad38; font-size: 18px; }
.card footer em { font-style: normal; font-weight: 400; font-size: 18px; color: #858585; }
.registered { flex: none; margin: 38px 0 0 27.500px; font-size: 14px; line-height: 20px; color: #26242b; }
.registered a { color: #dc3b16; }
.foot { height: 45px; flex: none; background: #18161f; display: flex; align-items: flex-start; padding: 25px 0 0 143px; overflow: hidden; }
.foot h4 { color: #fff; font-size: 18px; line-height: 25px; font-weight: 500; white-space: nowrap; }
.help-h { margin-left: 390px; width: 177px; }
.foot i { width: 1px; height: 30px; background: #444149; }
.links-h { margin-left: 79px; }
.widget { position: absolute; right: 0; top: 145px; width: 30px; display: flex; flex-direction: column; align-items: flex-end; }
.close { width: 15px; height: 15px; background: #c7c7c9; display: flex; align-items: center; justify-content: center; margin-bottom: 2px; }
.w1, .w2 { width: 30px; height: 30px; display: flex; align-items: center; justify-content: center; padding-left: 2px; }
.w1 { background: #8e43ad; box-shadow: 0 0 8px rgba(0, 0, 0, .65); }
.w2 { background: linear-gradient(90deg, #42b6e7, #455eea); box-shadow: -1px 0 6px rgba(0, 0, 0, .4); }
.help { position: absolute; right: 0; top: 396px; width: 18px; height: 72px; border-radius: 6px 0 0 6px; background: #241347; color: #fff; font-size: 12.500px; line-height: 16px; display: flex; flex-direction: column; align-items: center; padding-top: 5px; }
.tip { position: absolute; left: 1122px; top: 720px; width: 246px; height: 26px; border: 1px solid #fff; background: #2f2f2f; color: #f2f2f2; font: 14px/24px "Noto Sans", sans-serif; letter-spacing: .28px; padding-left: 7px; white-space: nowrap; box-shadow: 0 0 12px rgba(0, 0, 0, .3); }
</style>
